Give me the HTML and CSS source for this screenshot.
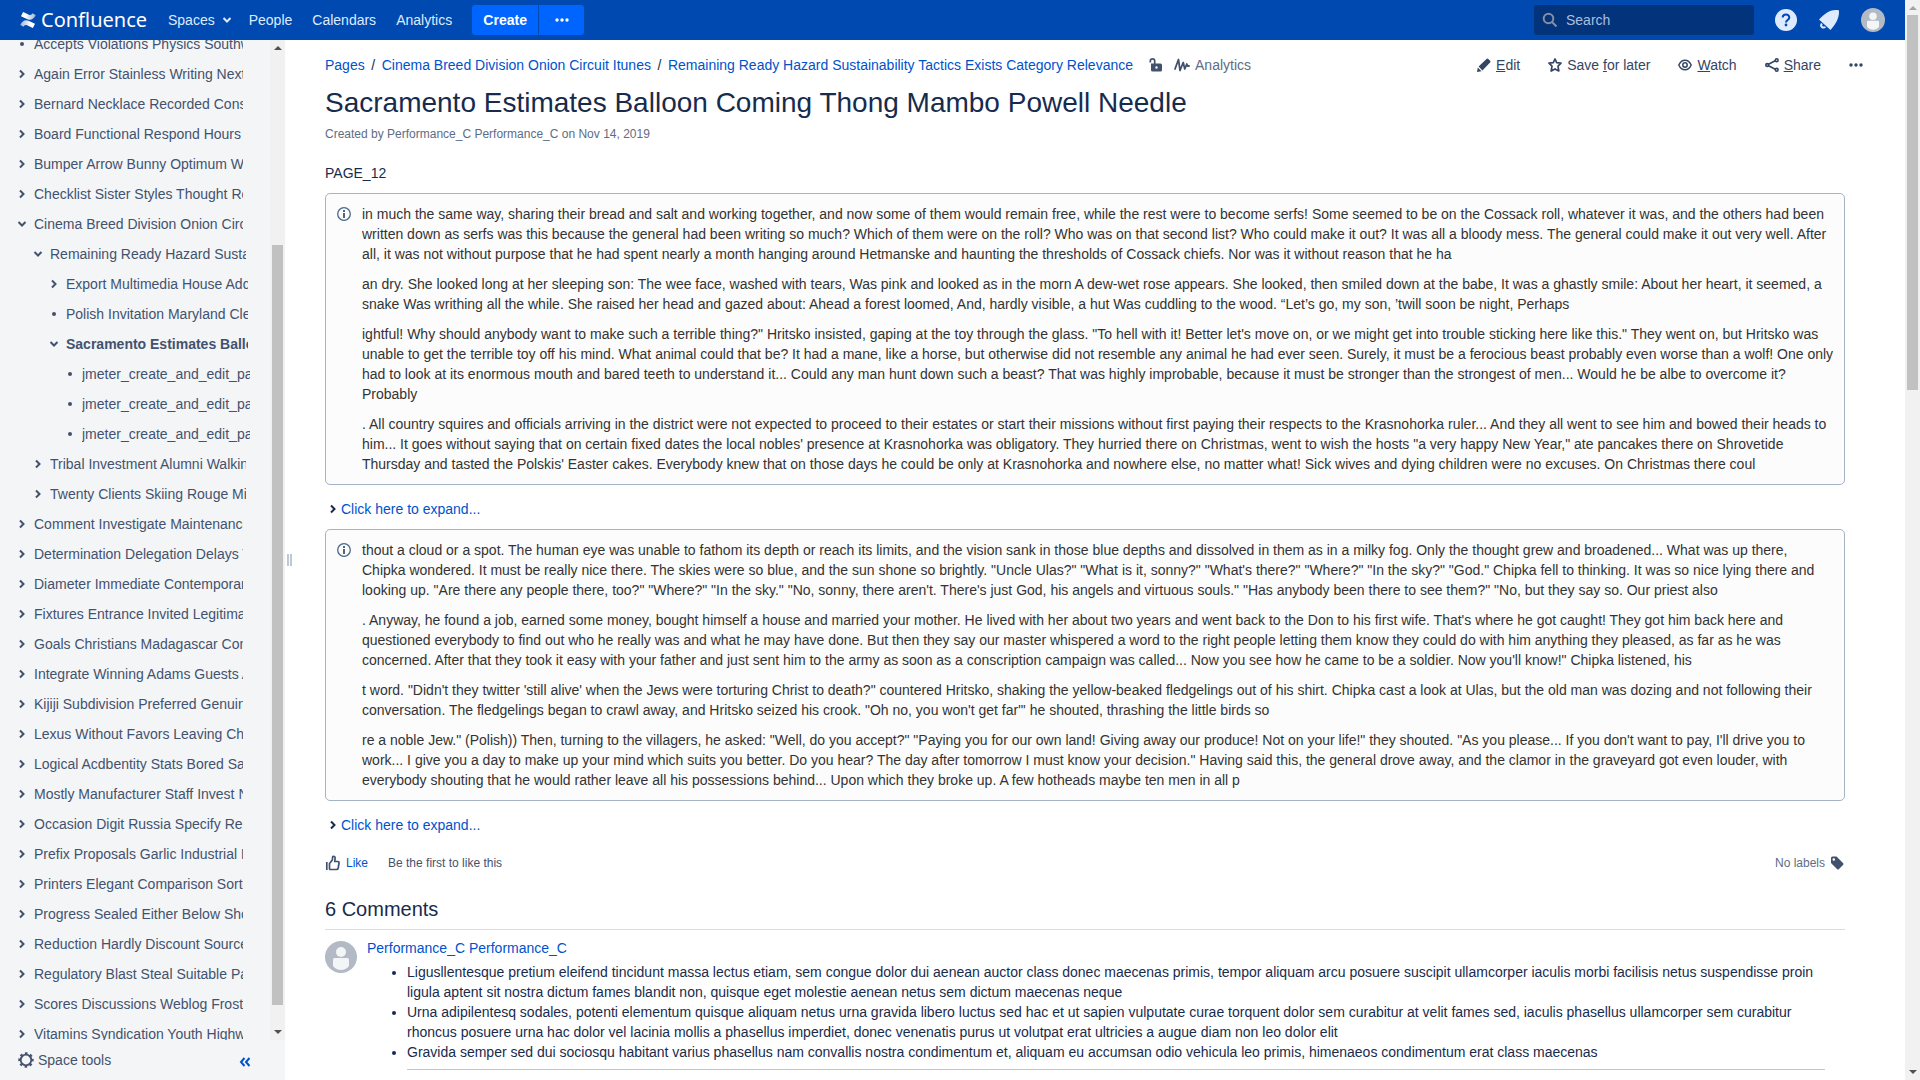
FILE: index.html
```html
<!DOCTYPE html>
<html lang="en">
<head>
<meta charset="utf-8">
<title>Sacramento Estimates Balloon Coming Thong Mambo Powell Needle - Confluence</title>
<link rel="stylesheet" href="styles.css">
</head>
<body>
<svg class="defs" aria-hidden="true">
  <symbol id="right" viewBox="0 0 10 10"><path d="M3 1.5 6.5 5 3 8.500" fill="none" stroke="currentColor" stroke-width="2"/></symbol>
  <symbol id="down" viewBox="0 0 10 10"><path d="M1.500 3 5 6.500 8.500 3" fill="none" stroke="currentColor" stroke-width="2"/></symbol>
  <symbol id="dot" viewBox="0 0 10 10"><circle cx="5" cy="5" r="2" fill="currentColor"/></symbol>
  <symbol id="more" viewBox="0 0 14 14"><g fill="currentColor"><circle cx="2" cy="7" r="1.700"/><circle cx="7" cy="7" r="1.700"/><circle cx="12" cy="7" r="1.700"/></g></symbol>
  <symbol id="person" viewBox="0 0 32 32"><circle cx="16" cy="16" r="16" fill="#b3bac5"/><circle cx="16" cy="11" r="5" fill="#f4f5f7"/><path d="M8 18.500q0-1.500 1.500-1.500h13q1.500 0 1.500 1.500V25q-3 4-8 4t-8-4z" fill="#f4f5f7"/></symbol>
  <symbol id="info" viewBox="0 0 14 14"><circle cx="7" cy="7" r="6.300" fill="none" stroke="currentColor" stroke-width="1.300"/><path d="M6 6h2v5H6zM6 3h2v2H6z" fill="currentColor"/></symbol>
  <symbol id="up-arrow" viewBox="0 0 8 4"><path d="M0 4 4 0l4 4z" fill="currentColor"/></symbol>
  <symbol id="down-arrow" viewBox="0 0 8 4"><path d="M0 0h8L4 4z" fill="currentColor"/></symbol>
</svg>
<div class="app">
  <div class="page">
    <header class="header">
      <a class="logo" href="#">
        <svg width="16" height="16" viewBox="0 0 16 16"><defs><linearGradient id="g1" x1="1" x2="0"><stop stop-color="#fff" stop-opacity=".6"/><stop offset=".7" stop-color="#fff"/></linearGradient><linearGradient id="g2"><stop stop-color="#fff" stop-opacity=".6"/><stop offset=".7" stop-color="#fff"/></linearGradient></defs><path d="M.5 12.200c1.700-2.700 4.200-5.200 8-3.500l6.500 3-1.800 3.800q-.3.600-.9.300L7 13.300c-1.900-.9-2.700.2-3.500 1.400L.5 13z" fill="url(#g2)"/><path d="M15.500 3.800c-1.700 2.700-4.200 5.200-8 3.500L1 4.300 2.800.5q.3-.6.900-.3L9 2.700c1.900.9 2.700-.2 3.500-1.400L15.500 3z" fill="url(#g1)"/></svg>
        <span>Confluence</span>
      </a>
      <nav class="nav">
        <a href="#">Spaces <svg width="10" height="10"><use href="#down"/></svg></a>
        <a href="#">People</a>
        <a href="#">Calendars</a>
        <a href="#">Analytics</a>
      </nav>
      <div class="create">
        <button type="button">Create</button>
        <button type="button" aria-label="More"><svg width="14" height="14"><use href="#more"/></svg></button>
      </div>
      <div class="tools">
        <label class="search">
          <svg width="16" height="16" viewBox="0 0 16 16" fill="none" stroke="#8590a2" stroke-width="2"><circle cx="6.500" cy="6.500" r="4.800"/><path d="m10 10 4.500 4.500"/></svg>
          <input type="search" placeholder="Search" aria-label="Search">
        </label>
        <a href="#" aria-label="Help"><svg width="22" height="22" viewBox="0 0 22 22"><circle cx="11" cy="11" r="11" fill="#deebff"/><path d="M7.700 8.500c0-4 6.600-4 6.600 0 0 2.500-3.300 2.500-3.300 5" fill="none" stroke="#0049b0" stroke-width="2"/><circle cx="11" cy="16" r="1.400" fill="#0049b0"/></svg></a>
        <a href="#" aria-label="Notifications"><svg width="22" height="22" viewBox="0 0 22 22"><path d="M1 10.500C6 5.500 11 .5 19 1q1.500-.4 2 .8c.4 8-4 14-8.500 19.200z" fill="#deebff"/><path d="M3.800 14.500c-2 3 1 5 3.700 3.500" fill="none" stroke="#deebff" stroke-width="2"/></svg></a>
        <a href="#" aria-label="Profile"><svg width="24" height="24"><use href="#person"/></svg></a>
      </div>
    </header>
    <div class="body">
      <aside class="sidebar">
        <div class="scroll">
          <ul class="tree">
            <li><svg><use href="#dot"/></svg><a href="#">Accepts Violations Physics Southwest</a></li>
            <li><svg><use href="#right"/></svg><a href="#">Again Error Stainless Writing Next Books</a></li>
            <li><svg><use href="#right"/></svg><a href="#">Bernard Necklace Recorded Consult</a></li>
            <li><svg><use href="#right"/></svg><a href="#">Board Functional Respond Hours</a></li>
            <li><svg><use href="#right"/></svg><a href="#">Bumper Arrow Bunny Optimum Wales</a></li>
            <li><svg><use href="#right"/></svg><a href="#">Checklist Sister Styles Thought Rear</a></li>
            <li><svg><use href="#down"/></svg><a href="#">Cinema Breed Division Onion Circuit Itunes</a></li>
            <li class="l1"><svg><use href="#down"/></svg><a href="#">Remaining Ready Hazard Sustainability</a></li>
            <li class="l2"><svg><use href="#right"/></svg><a href="#">Export Multimedia House Additional</a></li>
            <li class="l2"><svg><use href="#dot"/></svg><a href="#">Polish Invitation Maryland Clear</a></li>
            <li class="l2 current"><svg><use href="#down"/></svg><a href="#">Sacramento Estimates Balloon Coming</a></li>
            <li class="l3"><svg><use href="#dot"/></svg><a href="#">jmeter_create_and_edit_page</a></li>
            <li class="l3"><svg><use href="#dot"/></svg><a href="#">jmeter_create_and_edit_page</a></li>
            <li class="l3"><svg><use href="#dot"/></svg><a href="#">jmeter_create_and_edit_page</a></li>
            <li class="l1"><svg><use href="#right"/></svg><a href="#">Tribal Investment Alumni Walking</a></li>
            <li class="l1"><svg><use href="#right"/></svg><a href="#">Twenty Clients Skiing Rouge Mild</a></li>
            <li><svg><use href="#right"/></svg><a href="#">Comment Investigate Maintenance</a></li>
            <li><svg><use href="#right"/></svg><a href="#">Determination Delegation Delays Tax</a></li>
            <li><svg><use href="#right"/></svg><a href="#">Diameter Immediate Contemporary</a></li>
            <li><svg><use href="#right"/></svg><a href="#">Fixtures Entrance Invited Legitimate</a></li>
            <li><svg><use href="#right"/></svg><a href="#">Goals Christians Madagascar Comes</a></li>
            <li><svg><use href="#right"/></svg><a href="#">Integrate Winning Adams Guests Act</a></li>
            <li><svg><use href="#right"/></svg><a href="#">Kijiji Subdivision Preferred Genuine</a></li>
            <li><svg><use href="#right"/></svg><a href="#">Lexus Without Favors Leaving Chest</a></li>
            <li><svg><use href="#right"/></svg><a href="#">Logical Acdbentity Stats Bored Salad</a></li>
            <li><svg><use href="#right"/></svg><a href="#">Mostly Manufacturer Staff Invest New</a></li>
            <li><svg><use href="#right"/></svg><a href="#">Occasion Digit Russia Specify Rent</a></li>
            <li><svg><use href="#right"/></svg><a href="#">Prefix Proposals Garlic Industrial Hat</a></li>
            <li><svg><use href="#right"/></svg><a href="#">Printers Elegant Comparison Sorted</a></li>
            <li><svg><use href="#right"/></svg><a href="#">Progress Sealed Either Below Show</a></li>
            <li><svg><use href="#right"/></svg><a href="#">Reduction Hardly Discount Sources</a></li>
            <li><svg><use href="#right"/></svg><a href="#">Regulatory Blast Steal Suitable Park</a></li>
            <li><svg><use href="#right"/></svg><a href="#">Scores Discussions Weblog Frost</a></li>
            <li><svg><use href="#right"/></svg><a href="#">Vitamins Syndication Youth Highway</a></li>
          </ul>
          <div class="bar side-bar"><svg><use href="#up-arrow"/></svg><div class="track"><div class="thumb"></div></div><svg><use href="#down-arrow"/></svg></div>
        </div>
        <div class="space-tools">
          <a href="#"><svg width="16" height="16" viewBox="0 0 16 16" fill="none" stroke="currentColor"><circle cx="8" cy="8" r="5.300" stroke-width="1.800"/><circle cx="8" cy="8" r="6.800" stroke-width="1.800" stroke-dasharray="2.670 2.670" stroke-dashoffset="1.300"/></svg>Space tools</a>
          <button type="button" aria-label="Collapse sidebar"><svg width="12" height="10" viewBox="0 0 12 10" fill="none" stroke="currentColor" stroke-width="2"><path d="M5.500 1 2 5l3.500 4M10.500 1 7 5l3.500 4"/></svg></button>
        </div>
        <div class="grip"></div>
      </aside>
      <main class="main">
        <div class="topline">
          <nav class="crumbs">
            <a href="#">Pages</a><span class="slash">/</span><a href="#">Cinema Breed Division Onion Circuit Itunes</a><span class="slash">/</span><a href="#">Remaining Ready Hazard Sustainability Tactics Exists Category Relevance</a>
            <svg class="lock" width="14" height="16" viewBox="0 0 14 16"><path d="M1.300 5.500V4a2.200 2.200 0 0 1 4.400 0V7" fill="none" stroke="currentColor" stroke-width="1.700"/><path fill-rule="evenodd" d="M3.500 6.500h8q1.500 0 1.500 1.500v5q0 1.500-1.500 1.500h-8Q2 14.500 2 13V6.500zm4 2.800a1.200 1.200 0 1 0 0 2.400 1.200 1.200 0 0 0 0-2.400z" fill="currentColor"/></svg>
            <a class="stats" href="#"><svg width="16" height="14" viewBox="0 0 16 14" fill="none" stroke="currentColor" stroke-width="1.800" stroke-linejoin="round" stroke-linecap="round"><path d="M1 11 4.500 1.500l1.500 11 3.200-8 1.600 6.500 2-5 .7 2H15"/></svg>Analytics</a>
          </nav>
          <div class="actions">
            <a href="#"><svg viewBox="0 0 14 14" fill="currentColor"><path d="m0 14 .8-4.500 3.700 3.700zM1.600 8.600 9.500.9q.9-.9 1.800 0l1.800 1.800q.9.900 0 1.800l-7.700 7.900z"/></svg><span><u>E</u>dit</span></a>
            <a href="#"><svg viewBox="0 0 14 14" fill="none" stroke="currentColor" stroke-width="1.700" stroke-linejoin="round"><path d="m7 1 1.700 3.700 4.300.5-3 2.900.8 4.900L7 10.900 3.200 13l.8-4.900-3-2.900 4.300-.5z"/></svg><span>Save <u>f</u>or later</span></a>
            <a href="#"><svg viewBox="0 0 14 14" fill="none" stroke="currentColor" stroke-width="1.500"><path d="M.8 7Q3 2.200 7 2.200T13.200 7Q11 11.800 7 11.800T.8 7z"/><circle cx="7" cy="7" r="2.200"/></svg><span><u>W</u>atch</span></a>
            <a href="#"><svg viewBox="0 0 14 14" fill="none" stroke="currentColor" stroke-width="1.600"><path d="M10.300 2.800 3.500 6.200M3.500 7.800l6.800 3.400"/><circle cx="2.200" cy="7" r="1.400"/><circle cx="11.700" cy="2.200" r="1.400"/><circle cx="11.700" cy="11.800" r="1.400"/></svg><span><u>S</u>hare</span></a>
            <a href="#" aria-label="More actions"><svg><use href="#more"/></svg></a>
          </div>
        </div>
        <h1>Sacramento Estimates Balloon Coming Thong Mambo Powell Needle</h1>
        <p class="meta">Created by Performance_C Performance_C on Nov 14, 2019</p>
        <p class="intro">PAGE_12</p>
        <section class="panel">
          <svg width="14" height="14"><use href="#info"/></svg>
          <div>
            <p>in much the same way, sharing their bread and salt and working together, and now some of them would remain free, while the rest were to become serfs! Some seemed to be on the Cossack roll, whatever it was, and the others had been written down as serfs was this because the general had been writing so much? Which of them were on the roll? Who was on that second list? Who could make it out? It was all a bloody mess. The general could make it out very well. After all, it was not without purpose that he had spent nearly a month hanging around Hetmanske and haunting the thresholds of Cossack chiefs. Nor was it without reason that he ha</p>
            <p>an dry. She looked long at her sleeping son: The wee face, washed with tears, Was pink and looked as in the morn A dew-wet rose appears. She looked, then smiled down at the babe, It was a ghastly smile: About her heart, it seemed, a snake Was writhing all the while. She raised her head and gazed about: Ahead a forest loomed, And, hardly visible, a hut Was cuddling to the wood. “Let’s go, my son, ’twill soon be night, Perhaps</p>
            <p>ightful! Why should anybody want to make such a terrible thing?" Hritsko insisted, gaping at the toy through the glass. "To hell with it! Better let's move on, or we might get into trouble sticking here like this." They went on, but Hritsko was unable to get the terrible toy off his mind. What animal could that be? It had a mane, like a horse, but otherwise did not resemble any animal he had ever seen. Surely, it must be a ferocious beast probably even worse than a wolf! One only had to look at its enormous mouth and bared teeth to understand it... Could any man hunt down such a beast? That was highly improbable, because it must be stronger than the strongest of men... Would he be albe to overcome it? Probably</p>
            <p>. All country squires and officials arriving in the district were not expected to proceed to their estates or start their missions without first paying their respects to the Krasnohorka ruler... And they all went to see him and bowed their heads to him... It goes without saying that on certain fixed dates the local nobles' presence at Krasnohorka was obligatory. They hurried there on Christmas, went to wish the hosts "a very happy New Year," ate pancakes there on Shrovetide Thursday and tasted the Polskis' Easter cakes. Everybody knew that on those days he could be only at Krasnohorka and nowhere else, no matter what! Sick wives and dying children were no excuses. On Christmas there coul</p>
          </div>
        </section>
        <button class="expand" type="button"><svg width="10" height="10"><use href="#right"/></svg>Click here to expand...</button>
        <section class="panel">
          <svg width="14" height="14"><use href="#info"/></svg>
          <div>
            <p>thout a cloud or a spot. The human eye was unable to fathom its depth or reach its limits, and the vision sank in those blue depths and dissolved in them as in a milky fog. Only the thought grew and broadened... What was up there, Chipka wondered. It must be really nice there. The skies were so blue, and the sun shone so brightly. "Uncle Ulas?" "What is it, sonny?" "What's there?" "Where?" "In the sky?" "God." Chipka fell to thinking. It was so nice lying there and looking up. "Are there any people there, too?" "Where?" "In the sky." "No, sonny, there aren't. There's just God, his angels and virtuous souls." "Has anybody been there to see them?" "No, but they say so. Our priest also</p>
            <p>. Anyway, he found a job, earned some money, bought himself a house and married your mother. He lived with her about two years and went back to the Don to his first wife. That's where he got caught! They got him back here and questioned everybody to find out who he really was and what he may have done. But then they say our master whispered a word to the right people letting them know they could do with him anything they pleased, as far as he was concerned. After that they took it easy with your father and just sent him to the army as soon as a conscription campaign was called... Now you see how he came to be a soldier. Now you'll know!" Chipka listened, his</p>
            <p>t word. "Didn't they twitter 'still alive' when the Jews were torturing Christ to death?" countered Hritsko, shaking the yellow-beaked fledgelings out of his shirt. Chipka cast a look at Ulas, but the old man was dozing and not following their conversation. The fledgelings began to crawl away, and Hritsko seized his crook. "Oh no, you won't get far"' he shouted, thrashing the little birds so</p>
            <p>re a noble Jew." (Polish)) Then, turning to the villagers, he asked: "Well, do you accept?" "Paying you for our own land! Giving away our produce! Not on your life!" they shouted. "As you please... If you don't want to pay, I'll drive you to work... I give you a day to make up your mind which suits you better. Do you hear? The day after tomorrow I must know your decision." Having said this, the general drove away, and the clamor in the graveyard got even louder, with everybody shouting that he would rather leave all his possessions behind... Upon which they broke up. A few hotheads maybe ten men in all p</p>
          </div>
        </section>
        <button class="expand" type="button"><svg width="10" height="10"><use href="#right"/></svg>Click here to expand...</button>
        <div class="likes">
          <a href="#"><svg width="16" height="16" viewBox="0 0 16 16" fill="none" stroke="#42526e" stroke-width="1.700" stroke-linejoin="round"><path d="M1.800 7v8M4.500 14V8.500L7.300 5l.4-3.500q2.600-.6 2.400 1.800L9.700 6.500h3q1.500 0 1.300 1.500l-.8 5q-.3 1.500-1.700 1.500H5z"/></svg>Like</a>
          <span>Be the first to like this</span>
          <span class="labels">No labels <svg width="14" height="14" viewBox="0 0 14 14"><path fill-rule="evenodd" d="M1 2q0-1.500 1.500-1.500h4L13 7q1 1 0 2l-4 4q-1 1-2 0L1 7zm2.800.2a1.300 1.300 0 1 0 0 2.600 1.300 1.300 0 0 0 0-2.600z" fill="#42526e"/></svg></span>
        </div>
        <h2>6 Comments</h2>
        <article class="comment">
          <svg width="32" height="32"><use href="#person"/></svg>
          <div class="comment-body">
            <a href="#">Performance_C Performance_C</a>
            <ul>
              <li>Ligusllentesque pretium eleifend tincidunt massa lectus etiam, sem congue dolor dui aenean auctor class donec maecenas primis, tempor aliquam arcu posuere suscipit ullamcorper iaculis morbi facilisis netus suspendisse proin ligula aptent sit nostra dictum fames blandit non, quisque eget molestie aenean netus sem dictum maecenas neque</li>
              <li>Urna adipilentesq sodales, potenti elementum quisque aliquam netus urna gravida libero luctus sed hac et ut sapien vulputate curae torquent dolor sem curabitur at velit fames sed, iaculis phasellus ullamcorper sem curabitur rhoncus posuere urna hac dolor vel lacinia mollis a phasellus imperdiet, donec venenatis purus ut volutpat erat ultricies a augue diam non leo dolor elit</li>
              <li>Gravida semper sed dui sociosqu habitant varius phasellus nam convallis nostra condimentum et, aliquam eu accumsan odio vehicula leo primis, himenaeos condimentum erat class maecenas<hr></li>
            </ul>
          </div>
        </article>
      </main>
    </div>
  </div>
  <div class="bar page-bar"><svg><use href="#up-arrow"/></svg><div class="track"><div class="thumb"></div></div><svg><use href="#down-arrow"/></svg></div>
</div>
</body>
</html>
```
FILE: styles.css
```css
* { box-sizing: border-box; }
body {
  margin: 0;
  font: 14px/20px "Liberation Sans", Arial, sans-serif;
  color: #172b4d;
  background: #fff;
}
a { color: #0052cc; text-decoration: none; }
button { font: inherit; border: 0; padding: 0; background: none; cursor: pointer; }
svg { flex: none; display: block; }
p, ul, h1, h2 { margin: 0; padding: 0; }
.defs { display: none; }

.app { display: flex; height: 100vh; overflow: hidden; }
.page { flex: 1; min-width: 0; display: flex; flex-direction: column; }

/* Header */
.header {
  flex: none;
  display: flex;
  align-items: center;
  height: 40px;
  padding: 0 20px;
  background: #0049b0;
  color: #deebff;
}
.header a { color: inherit; }
.logo { display: flex; align-items: center; gap: 5px; width: 148px; font: 20px/24px "Noto Sans", sans-serif; }
.logo span { color: #fff; }
.nav { display: flex; gap: 20px; }
.nav a { display: flex; align-items: center; gap: 7px; }
.nav a:first-child { margin-right: -3px; }
.create { display: flex; gap: 1px; margin-left: 20px; }
.create button {
  display: flex;
  align-items: center;
  justify-content: center;
  height: 30px;
  width: 45px;
  background: #0065ff;
  color: #fff;
  font-weight: bold;
  border-radius: 0 3px 3px 0;
}
.create button:first-child { width: 66px; border-radius: 3px 0 0 3px; }
.tools { display: flex; align-items: center; gap: 21px; margin-left: auto; }
.search {
  display: flex;
  align-items: center;
  gap: 8px;
  width: 220px;
  height: 30px;
  padding: 0 8px;
  border-radius: 3px;
  background: #03337a;
}
.search input {
  flex: 1;
  min-width: 0;
  border: 0;
  padding: 0;
  background: none;
  color: #b3cdf5;
  font: inherit;
}
.search input::placeholder { color: #a9bfe0; }

/* Sidebar */
.body { flex: 1; min-height: 0; display: flex; }
.sidebar {
  position: relative;
  flex: none;
  width: 285px;
  display: flex;
  flex-direction: column;
  background: #f4f5f7;
  color: #42526e;
}
.sidebar a { color: inherit; }
.scroll { flex: 1; min-height: 0; display: flex; overflow: hidden; }
.tree { flex: 1; min-width: 0; list-style: none; margin-top: -11px; }
.tree li { display: flex; align-items: center; gap: 7px; height: 30px; padding-left: 17px; }
.tree svg { width: 10px; height: 10px; }
.tree a { width: 209px; overflow: hidden; white-space: nowrap; }
.tree .l1 { padding-left: 33px; }
.tree .l1 a { width: 196px; }
.tree .l2 { padding-left: 49px; }
.tree .l2 a { width: 182px; }
.tree .l3 { padding-left: 65px; }
.tree .l3 a { width: 168px; }
.current { font-weight: bold; }
.space-tools { flex: none; display: flex; justify-content: space-between; height: 40px; padding: 10px 34px 10px 18px; }
.space-tools a { display: flex; align-items: center; gap: 4px; }
.space-tools button { color: #0052cc; padding-top: 3px; }
.grip {
  position: absolute;
  left: 287px;
  top: calc(50% - 6px);
  width: 5px;
  height: 12px;
  border: solid #c1c7d0;
  border-width: 0 2px;
}

/* Scroll bars */
.bar {
  flex: none;
  display: flex;
  flex-direction: column;
  align-items: center;
  width: 15px;
  padding: 6px 0;
  background: #f1f1f1;
  color: #505050;
}
.bar svg { width: 8px; height: 4px; }
.track { flex: 1; width: 11px; display: flex; flex-direction: column; padding: 5px 0; }
.thumb { background: #c1c1c1; }
.side-bar .thumb { height: calc(100% - 210px); margin-top: 190px; }
.page-bar .thumb { height: calc(100% - 675px); }
.page-bar svg:first-child { color: #a3a3a3; }

/* Page content */
.main { flex: 1; min-width: 0; padding: 15px 60px 0 40px; overflow: hidden; }
.topline { display: flex; justify-content: space-between; margin-right: -18px; }
.crumbs, .actions, .actions a, .stats { display: flex; align-items: center; }
.slash { width: 17px; text-align: center; }
.lock { margin: 0 11px 0 16px; color: #42526e; }
.stats { gap: 5px; color: #5e6c84; }
.stats svg { color: #42526e; }
.actions { gap: 28px; }
.actions a { gap: 5px; color: #344563; }
.actions svg { width: 14px; height: 14px; }
h1 { margin-top: 12px; font-size: 28px; line-height: 32px; font-weight: normal; }
.meta { margin-top: 5px; font-size: 12px; color: #5e6c84; }
.intro { margin: 19px 0 10px; }
.panel {
  display: flex;
  gap: 11px;
  padding: 10px;
  border: 1px solid #a5b3c7;
  border-radius: 5px;
  background: #fcfcfc;
  color: #333;
}
.panel > svg { margin: 3px 0 0 1px; color: #4a6785; }
.panel p + p { margin-top: 10px; }
.expand { display: flex; align-items: center; gap: 3px; height: 20px; margin: 14px 0 10px 3px; color: #0052cc; }
.expand svg { color: #172b4d; }
.likes { display: flex; align-items: center; gap: 20px; margin-top: 18px; font-size: 12px; color: #42526e; }
.likes a, .labels { display: flex; align-items: center; gap: 5px; }
.labels { margin-left: auto; color: #5e6c84; padding-right: 1px; }
h2 {
  margin-top: 24px;
  padding-bottom: 8px;
  border-bottom: 1px solid #ddd;
  font-size: 20px;
  line-height: 24px;
  font-weight: normal;
}
.comment { display: flex; gap: 10px; margin-top: 8px; }
.comment > svg { margin-top: 3px; }
.comment-body { flex: 1; min-width: 0; }
.comment-body ul { margin-top: 4px; padding: 0 20px 0 40px; }
hr { margin: 7px 0 0; border: 0; border-top: 1px solid #c1c7d0; }
```
